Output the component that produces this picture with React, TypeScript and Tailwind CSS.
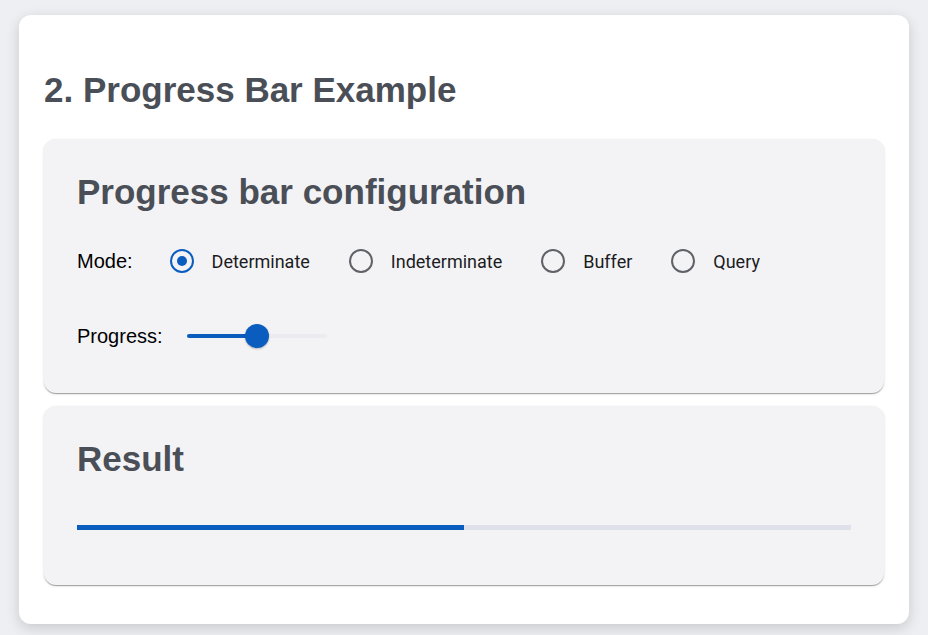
import { useState } from "react"

const modes = ["Determinate", "Indeterminate", "Buffer", "Query"]

function Radio({ label, checked, onSelect }: { label: string; checked: boolean; onSelect: () => void }) {
  return (
    <label className="flex cursor-pointer items-center gap-[18px]" onClick={onSelect}>
      <span
        className={
          checked
            ? "flex h-[24px] w-[24px] items-center justify-center rounded-full border-2 border-[#0b5cbf]"
            : "flex h-[24px] w-[24px] items-center justify-center rounded-full border-2 border-[#5f6166]"
        }
      >
        {checked ? <span className="h-[10px] w-[10px] rounded-full bg-[#0b5cbf]" /> : null}
      </span>
      <span className="font-['Roboto',sans-serif] text-[18px] text-[#1c1c1e]">{label}</span>
    </label>
  )
}

export default function App() {
  const [mode, setMode] = useState("Determinate")
  const value = 50

  return (
    <div className="min-h-screen bg-[#eeeff3] px-[19px] pt-[15px] font-['Liberation_Sans',Arial,sans-serif]">
      <div className="rounded-[12px] bg-white px-[25px] pb-[39px] pt-[55px] shadow-[0_4px_14px_rgb(0_0_0/16%)]">
        <h2 className="mb-[29px] text-[35px] font-bold leading-[40px] text-[#4a4f57]">2. Progress Bar Example</h2>

        <section className="rounded-[12px] bg-[#f3f3f6] px-[33px] pb-[36px] pt-[33px] shadow-[0_2px_1px_-1px_rgb(0_0_0/20%),0_1px_1px_0_rgb(0_0_0/14%),0_1px_3px_0_rgb(0_0_0/12%)]">
          <h3 className="text-[35px] font-bold leading-[40px] text-[#4a4f57]">Progress bar configuration</h3>

          <div className="mt-[28px] flex h-[42px] items-center">
            <span className="text-[20px] text-black">Mode:</span>
            <div className="ml-[37px] flex items-center gap-[39px]">
              {modes.map((m) => (
                <Radio key={m} label={m} checked={mode === m} onSelect={() => setMode(m)} />
              ))}
            </div>
          </div>

          <div className="mt-[33px] flex h-[42px] items-center">
            <span className="text-[20px] text-black">Progress:</span>
            <div className="relative ml-[24px] h-[24px] w-[140px]">
              <div className="absolute left-0 right-0 top-[10px] h-[4px] rounded-full bg-[#ebebf0]" />
              <div
                className="absolute left-0 top-[10px] h-[4px] rounded-full bg-[#0b5cbf]"
                style={{ width: `${value}%` }}
              />
              <div
                className="absolute top-0 h-[24px] w-[24px] -translate-x-1/2 rounded-full bg-[#0b5cbf] shadow-[0_1px_2px_rgb(0_0_0/25%)]"
                style={{ left: `${value}%` }}
              />
            </div>
          </div>
        </section>

        <section className="mt-[13px] rounded-[12px] bg-[#f3f3f6] px-[33px] pb-[55px] pt-[33px] shadow-[0_2px_1px_-1px_rgb(0_0_0/20%),0_1px_1px_0_rgb(0_0_0/14%),0_1px_3px_0_rgb(0_0_0/12%)]">
          <h3 className="text-[35px] font-bold leading-[40px] text-[#4a4f57]">Result</h3>
          <div className="mt-[46px] h-[5px] w-full bg-[#dfe1ea]">
            <div className="h-full bg-[#0b5cbf]" style={{ width: `${value}%` }} />
          </div>
        </section>
      </div>
    </div>
  )
}
